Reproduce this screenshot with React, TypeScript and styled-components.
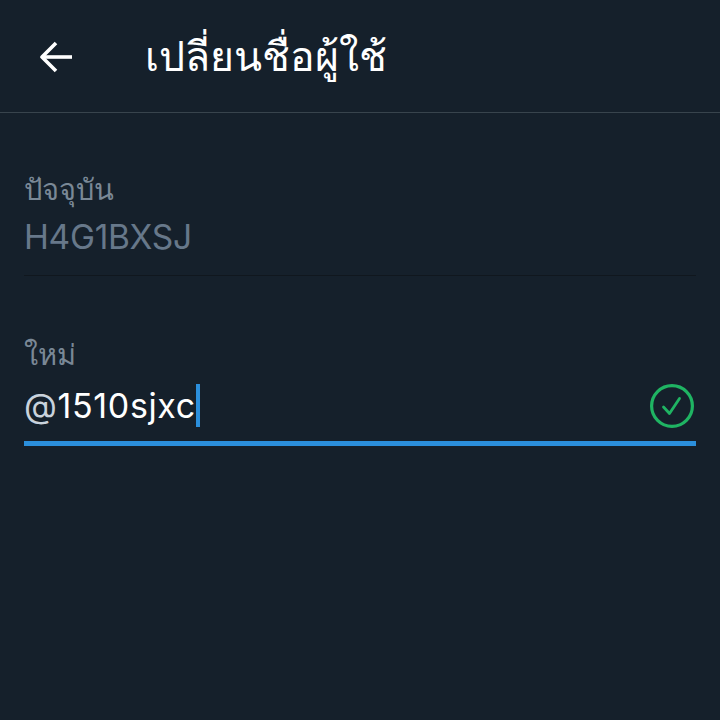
import React from "react";
import styled, { createGlobalStyle } from "styled-components";

const Global = createGlobalStyle`
  html, body { margin: 0; padding: 0; background: #15202b; }
  * { box-sizing: border-box; }
`;

const FONT = `Inter, "Liberation Sans", sans-serif`;

const Page = styled.div`
  width: 720px;
  height: 720px;
  background: #15202b;
  font-family: ${FONT};
  display: flex;
  flex-direction: column;
  overflow: hidden;
`;

const Header = styled.header`
  height: 113px;
  flex: none;
  display: flex;
  align-items: center;
  padding: 0 0 0 40px;
  border-bottom: 1px solid #38444d;
`;

const BackButton = styled.div`
  width: 33px;
  height: 32px;
  margin: 1px 72px 0 0;
  display: flex;
  color: #fff;
`;

const Title = styled.h1`
  margin: 0;
  font-size: 41px;
  font-weight: 400;
  line-height: 44px;
  color: #fff;
`;

const Form = styled.div`
  display: flex;
  flex-direction: column;
  padding: 60px 24px 0;
`;

const FieldLabel = styled.div`
  font-size: 29px;
  line-height: 34px;
  color: #7a8896;
`;

const Current = styled.div`
  margin-top: 3px;
  height: 66px;
  padding-top: 2px;
  font-size: 33.5px;
  line-height: 50px;
  letter-spacing: -0.3px;
  color: #67788a;
  border-bottom: 1px solid #10171e;
`;

const NewField = styled.div`
  margin-top: 62px;
`;

const InputRow = styled.div`
  margin-top: 12px;
  height: 62px;
  display: flex;
  align-items: flex-start;
  justify-content: space-between;
  border-bottom: 5px solid #2b8fdc;
`;

const InputText = styled.div`
  display: flex;
  font-size: 34px;
  line-height: 44px;
  letter-spacing: 0.65px;
  color: #fff;
`;

const At = styled.span`
  color: #c9d2dc;
`;

const Caret = styled.span`
  width: 4px;
  height: 43px;
  background: #2b8fdc;
`;

const Valid = styled.svg`
  width: 44px;
  height: 44px;
  margin-right: 2px;
  flex: none;
`;

export default function App() {
  return (
    <Page>
      <Global />
      <Header>
        <BackButton>
          <svg width="33" height="32" viewBox="0 0 33 32" fill="none" stroke="currentColor" strokeWidth="3.6" strokeLinejoin="round">
            <path d="M2 16H32" />
            <path d="M16 2L2 16L16 30" />
          </svg>
        </BackButton>
        <Title>เปลี่ยนชื่อผู้ใช้</Title>
      </Header>
      <Form>
        <FieldLabel>ปัจจุบัน</FieldLabel>
        <Current>H4G1BXSJ</Current>
        <NewField>
          <FieldLabel>ใหม่</FieldLabel>
          <InputRow>
            <InputText>
              <span><At>@</At>1510sjxc</span>
              <Caret />
            </InputText>
            <Valid viewBox="0 0 44 44" fill="none" stroke="#1fb463">
              <circle cx="22" cy="22" r="20.4" strokeWidth="3.2" />
              <path d="M13.5 23L19.5 29.5L29.5 14.5" strokeWidth="2.8" strokeLinecap="round" strokeLinejoin="round" />
            </Valid>
          </InputRow>
        </NewField>
      </Form>
    </Page>
  );
}
